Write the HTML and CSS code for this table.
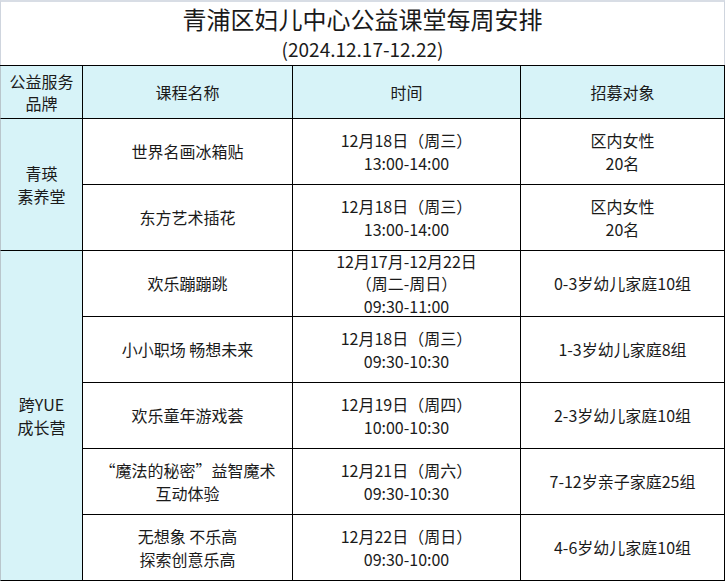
FILE: index.html
```html
<!DOCTYPE html>
<html lang="zh">
<head>
<meta charset="utf-8">
<link rel="stylesheet" href="styles.css">
</head>
<body>
<div class="sheet">
  <div class="title-block">
    <div class="title">青浦区妇儿中心公益课堂每周安排</div>
    <div class="subtitle">(2024.12.17-12.22)</div>
  </div>
  <div class="grid">
    <div class="cell head first">公益服务<br>品牌</div>
    <div class="cell head">课程名称</div>
    <div class="cell head">时间</div>
    <div class="cell head">招募对象</div>

    <div class="cell brand span2">青瑛<br>素养堂</div>
    <div class="cell">世界名画冰箱贴</div>
    <div class="cell">12月18日（周三）<br>13:00-14:00</div>
    <div class="cell">区内女性<br>20名</div>

    <div class="cell">东方艺术插花</div>
    <div class="cell">12月18日（周三）<br>13:00-14:00</div>
    <div class="cell">区内女性<br>20名</div>

    <div class="cell brand span5">跨YUE<br>成长营</div>
    <div class="cell">欢乐蹦蹦跳</div>
    <div class="cell">12月17月-12月22日<br>（周二-周日）<br>09:30-11:00</div>
    <div class="cell">0-3岁幼儿家庭10组</div>

    <div class="cell">小小职场 畅想未来</div>
    <div class="cell">12月18日（周三）<br>09:30-10:30</div>
    <div class="cell">1-3岁幼儿家庭8组</div>

    <div class="cell">欢乐童年游戏荟</div>
    <div class="cell">12月19日（周四）<br>10:00-10:30</div>
    <div class="cell">2-3岁幼儿家庭10组</div>

    <div class="cell">“魔法的秘密”益智魔术<br>互动体验</div>
    <div class="cell">12月21日（周六）<br>09:30-10:30</div>
    <div class="cell">7-12岁亲子家庭25组</div>

    <div class="cell">无想象 不乐高<br>探索创意乐高</div>
    <div class="cell">12月22日（周日）<br>09:30-10:00</div>
    <div class="cell">4-6岁幼儿家庭10组</div>
  </div>
</div>
</body>
</html>
```

FILE: styles.css
```css
html, body {
  margin: 0;
  padding: 0;
  background: #ffffff;
}
body {
  font-family: "Microsoft YaHei", "Noto Sans CJK SC", "Noto Sans", sans-serif;
  color: #1a1a1a;
}
.sheet {
  width: 725px;
}
.title-block {
  box-sizing: border-box;
  height: 65px;
  border-top: 2px solid #d8dde5;
  border-left: 1px solid #cfd5de;
  border-right: 1px solid #cfd5de;
  display: flex;
  flex-direction: column;
  align-items: center;
}
.title {
  font-size: 24px;
  line-height: 34px;
  margin-top: 0;
}
.subtitle {
  font-size: 19px;
  line-height: 26px;
  margin-top: 0;
}
.grid {
  display: grid;
  grid-template-columns: 83px 210px 228px 204px;
  grid-template-rows: 53px repeat(7, 66px);
  border-top: 1px solid #000;
}
.cell {
  box-sizing: border-box;
  border-right: 1px solid #000;
  border-bottom: 1px solid #000;
  display: flex;
  align-items: center;
  justify-content: center;
  text-align: center;
  font-size: 16px;
  line-height: 22.5px;
}
.head {
  background: #d7f3f8;
}
.head.first {
  line-height: 22px;
  border-left: 1px solid #b9c6cc;
}
.brand {
  background: #d7f3f8;
  border-left: 1px solid #b9c6cc;
  line-height: 23px;
}
.span2 {
  grid-row: span 2;
}
.span5 {
  grid-row: span 5;
}
```
